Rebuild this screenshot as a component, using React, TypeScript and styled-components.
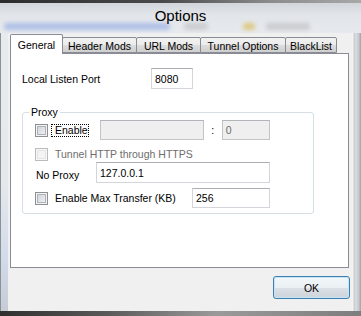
import React from 'react';
import styled, { createGlobalStyle } from 'styled-components';

const GlobalStyle = createGlobalStyle`
    html, body {
        margin: 0;
        padding: 0;
        background: #d6dbe1;
    }
    body {
        font-family: "Liberation Sans", Arial, sans-serif;
        font-size: 10.5px;
        color: #000;
    }
    * {
        box-sizing: border-box;
    }
`;

const Window = styled.div`
    width: 361px;
    height: 316px;
    display: flex;
    flex-direction: column;
    overflow: hidden;
    background: linear-gradient(180deg, #d9dce0 0%, #e3e6ea 12%, #e5e8ec 100%);
`;

const TopEdge = styled.div`
    height: 3px;
    background: linear-gradient(90deg, #2c2c2c 0%, #4a4a4a 45%, #8c8c8c 75%, #a8a8a8 100%);
`;

const TitleBar = styled.div`
    position: relative;
    height: 30px;
    display: flex;
    justify-content: center;
    align-items: flex-start;
    padding-top: 3px;
    background: linear-gradient(180deg, #d2d5d9 0%, #e2e5e9 40%, #e6e9ee 100%);
`;

const Title = styled.div`
    position: relative;
    z-index: 1;
    font-size: 15px;
    line-height: 20px;
    color: #000;
`;

// blurred desktop content seen through the glass frame
const Smudge = styled.span<{ $left: number; $width: number; $color: string; $opacity?: number }>`
    position: absolute;
    left: ${p => p.$left}px;
    top: 20px;
    width: ${p => p.$width}px;
    height: 7px;
    border-radius: 3px;
    background: ${p => p.$color};
    opacity: ${p => p.$opacity ?? 0.45};
    filter: blur(2px);
`;

const Middle = styled.div`
    flex: 1;
    display: flex;
`;

const LeftEdge = styled.div`
    width: 8px;
    border-left: 1px solid #8c9196;
    background: linear-gradient(180deg, #e8ebee 0%, #e4e8ec 55%, #d3dceb 80%, #c5ccd6 100%);
`;

const RightEdge = styled.div`
    width: 9px;
    background: linear-gradient(90deg, #f3f3f3 0px, #f3f3f3 1px, #c8cbcf 2px, #dadde0 4px, #c4c7ca 7px, #9ea2a6 9px);
`;

const BottomEdge = styled.div`
    height: 5px;
    background: linear-gradient(90deg, #2f2f2f 0%, #5a5a5a 30%, #9a9a9a 60%, #7d7d7d 100%);
`;

const Client = styled.div`
    width: 344px;
    display: flex;
    flex-direction: column;
    background: #f0f0f0;
`;

const TabStrip = styled.div`
    height: 20px;
    display: flex;
    align-items: flex-end;
    padding-left: 2px;
`;

const Tab = styled.div<{ $width: number; $active?: boolean }>`
    position: relative;
    width: ${p => p.$width}px;
    height: ${p => (p.$active ? 20 : 16)}px;
    margin-bottom: ${p => (p.$active ? -1 : 0)}px;
    margin-right: -1px;
    z-index: ${p => (p.$active ? 2 : 1)};
    display: flex;
    align-items: center;
    justify-content: center;
    padding-top: ${p => (p.$active ? 0 : 1)}px;
    border: 1px solid #898c95;
    border-bottom: ${p => (p.$active ? 'none' : '1px solid #898c95')};
    border-radius: 2px 2px 0 0;
    background: ${p =>
        p.$active ? '#ffffff' : 'linear-gradient(180deg, #f2f2f2 0%, #ebebeb 50%, #dddddd 51%, #cfcfcf 100%)'};
    white-space: nowrap;
`;

const Panel = styled.div`
    height: 215px;
    margin: 0 3px 0 2px;
    border: 1px solid #898c95;
    background: #ffffff;
    padding: 14px 11px 0;
`;

const PortRow = styled.div`
    height: 21px;
    display: flex;
    align-items: center;
`;

const FieldLabel = styled.div<{ $width: number; $offset?: number }>`
    width: ${p => p.$width}px;
    padding-top: ${p => p.$offset ?? 0}px;
    white-space: nowrap;
`;

const TextInput = styled.div<{ $width: number; $height?: number; $disabled?: boolean }>`
    width: ${p => p.$width}px;
    height: ${p => p.$height ?? 21}px;
    display: flex;
    align-items: center;
    padding-left: 3px;
    border: 1px solid ${p => (p.$disabled ? '#c2c4c8' : '#d3d5da')};
    border-top-color: ${p => (p.$disabled ? '#b2b5ba' : '#abadb3')};
    background: ${p => (p.$disabled ? '#efefef' : '#ffffff')};
    color: ${p => (p.$disabled ? '#6d6d6d' : '#000')};
    white-space: nowrap;
`;

const GroupBox = styled.div`
    position: relative;
    width: 292px;
    height: 102px;
    margin-top: 23px;
    border: 1px solid #d5dfe5;
    border-radius: 3px;
    padding: 7px 0 0 12px;
`;

const Legend = styled.span`
    position: absolute;
    left: 6px;
    top: -8px;
    padding: 0 2px;
    line-height: 14px;
    background: #ffffff;
`;

const Row = styled.div<{ $height: number; $gap?: number }>`
    height: ${p => p.$height}px;
    margin-top: ${p => p.$gap ?? 0}px;
    display: flex;
    align-items: center;
`;

const CheckBox = styled.span<{ $disabled?: boolean }>`
    flex: none;
    width: 13px;
    height: 13px;
    border: 1px solid ${p => (p.$disabled ? '#bcbcbc' : '#8e8f8f')};
    background: #f4f4f4;
    box-shadow: inset 0 0 0 1px ${p => (p.$disabled ? '#f8f8f8' : '#f4f4f4')},
        inset 0 0 0 2px ${p => (p.$disabled ? '#e4e4e4' : '#aeb3b9')};
    background-image: ${p =>
        p.$disabled ? 'none' : 'linear-gradient(135deg, #cbcfd5 0%, #e4e6e9 60%, #f6f6f6 100%)'};
`;

const CheckText = styled.span<{ $width?: number; $disabled?: boolean }>`
    margin-left: 7px;
    width: ${p => (p.$width ? `${p.$width}px` : 'auto')};
    color: ${p => (p.$disabled ? '#6d6d6d' : '#000')};
    white-space: nowrap;
`;

const FocusText = styled.span`
    margin-left: 3px;
    height: 13px;
    line-height: 11px;
    padding: 0 0 0 3px;
    border: 1px dotted #000;
    white-space: nowrap;
`;

const Colon = styled.span`
    width: 18px;
    text-align: center;
`;

const Footer = styled.div`
    flex: 1;
    display: flex;
    justify-content: flex-end;
    align-items: flex-start;
    padding: 8px 2px 0 0;
`;

const Button = styled.button`
    width: 77px;
    height: 23px;
    padding: 0;
    border: 1px solid #3c7fb1;
    border-radius: 3px;
    font-family: inherit;
    font-size: 10.5px;
    color: #000;
    background: linear-gradient(180deg, #f2f7fa 0%, #ebf0f4 50%, #dbe1e6 51%, #cdd3d8 100%);
    box-shadow: inset 0 0 0 1px #c7e5f6;
`;

const tabs = [
    { label: 'General', width: 53, active: true },
    { label: 'Header Mods', width: 75 },
    { label: 'URL Mods', width: 65 },
    { label: 'Tunnel Options', width: 86 },
    { label: 'BlackList', width: 52 },
];

const App = () => (
    <>
        <GlobalStyle />
        <Window>
            <TopEdge />
            <TitleBar>
                <Smudge $left={4} $width={166} $color="#6f8fe0" />
                <Smudge $left={184} $width={24} $color="#9a9a9a" $opacity={0.35} />
                <Smudge $left={243} $width={12} $color="#d9b540" $opacity={0.6} />
                <Smudge $left={266} $width={44} $color="#9a9a9a" $opacity={0.35} />
                <Title>Options</Title>
            </TitleBar>
            <Middle>
                <LeftEdge />
                <Client>
                    <TabStrip>
                        {tabs.map(t => (
                            <Tab key={t.label} $width={t.width} $active={t.active}>
                                {t.label}
                            </Tab>
                        ))}
                    </TabStrip>
                    <Panel>
                        <PortRow>
                            <FieldLabel $width={129}>Local Listen Port</FieldLabel>
                            <TextInput $width={42}>8080</TextInput>
                        </PortRow>
                        <GroupBox>
                            <Legend>Proxy</Legend>
                            <Row $height={20}>
                                <CheckBox />
                                <FocusText>Enable</FocusText>
                                <TextInput $width={104} $height={20} $disabled style={{ marginLeft: 11 }} />
                                <Colon>:</Colon>
                                <TextInput $width={48} $height={20} $disabled>
                                    0
                                </TextInput>
                            </Row>
                            <Row $height={14} $gap={7}>
                                <CheckBox $disabled />
                                <CheckText $disabled>Tunnel HTTP through HTTPS</CheckText>
                            </Row>
                            <Row $height={21} $gap={1}>
                                <FieldLabel $width={61} $offset={4} style={{ paddingLeft: 1 }}>
                                    No Proxy
                                </FieldLabel>
                                <TextInput $width={174}>127.0.0.1</TextInput>
                            </Row>
                            <Row $height={20} $gap={5}>
                                <CheckBox />
                                <CheckText $width={137}>Enable Max Transfer (KB)</CheckText>
                                <TextInput $width={78} $height={20}>
                                    256
                                </TextInput>
                            </Row>
                        </GroupBox>
                    </Panel>
                    <Footer>
                        <Button>OK</Button>
                    </Footer>
                </Client>
                <RightEdge />
            </Middle>
            <BottomEdge />
        </Window>
    </>
);

export default App;
